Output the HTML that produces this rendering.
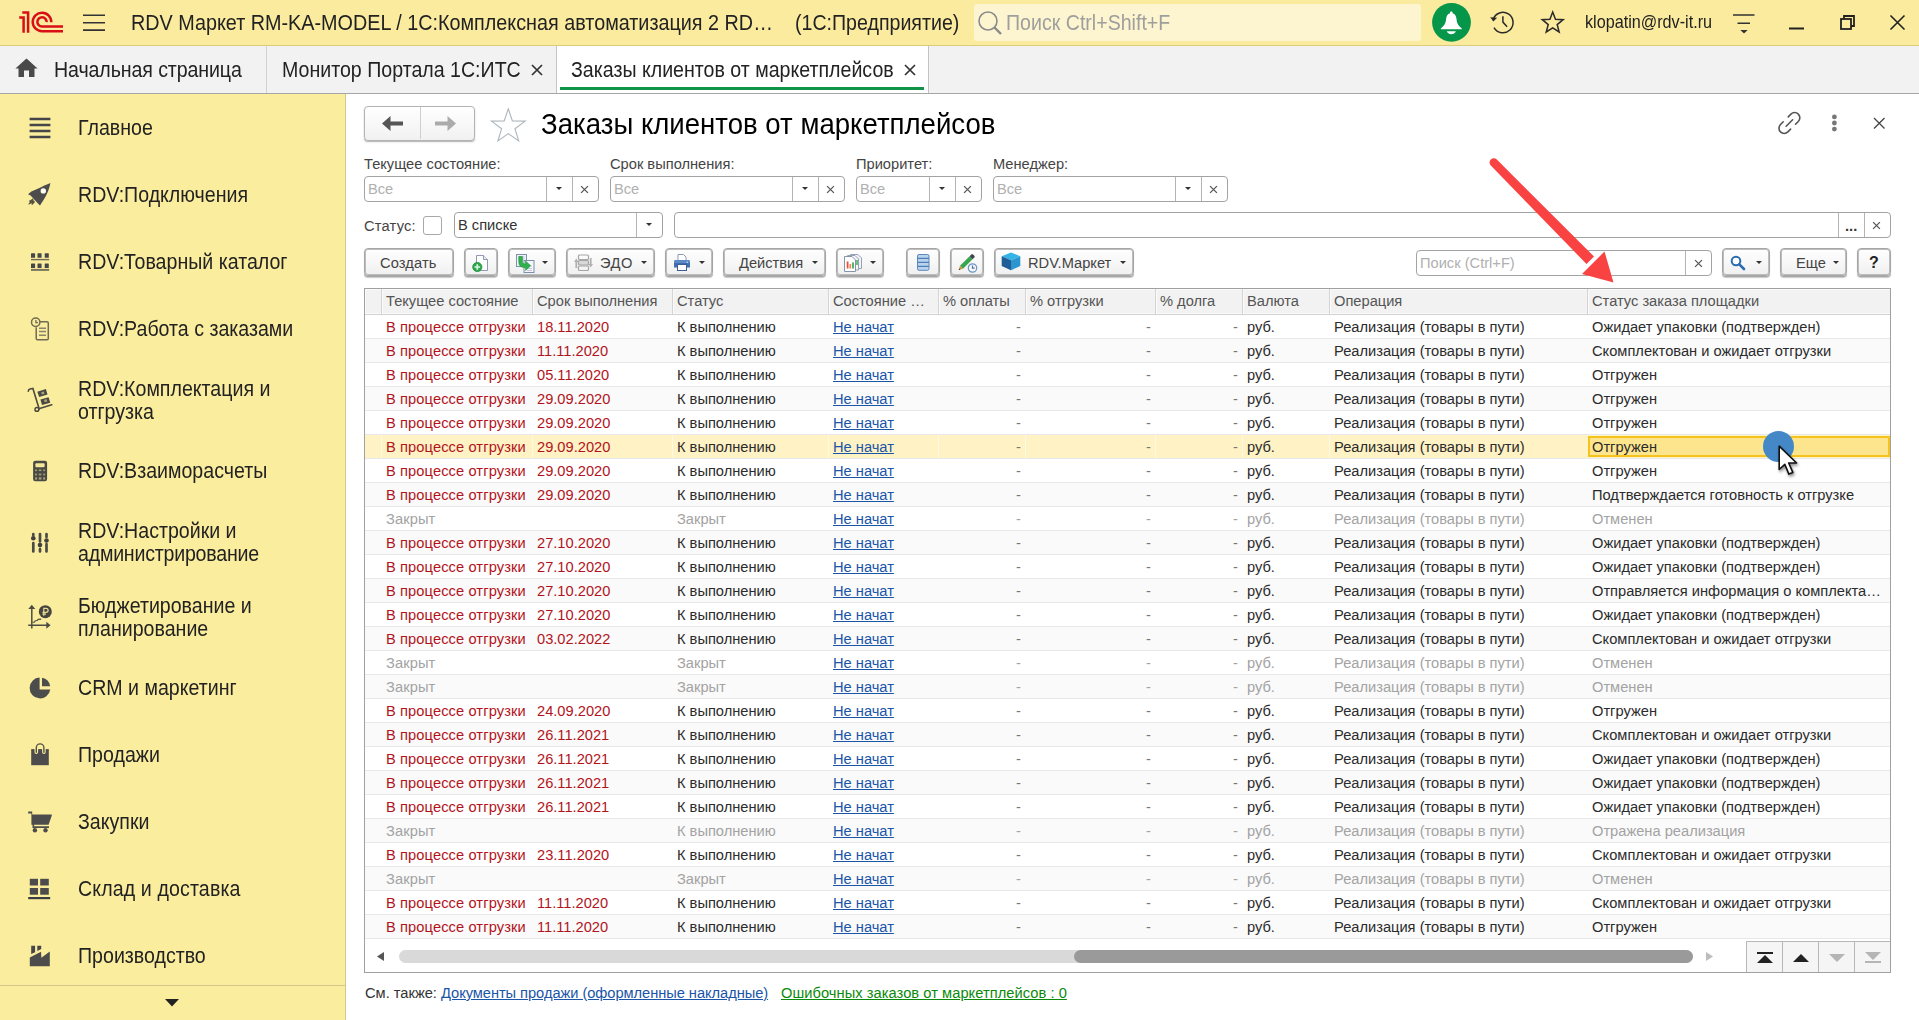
<!DOCTYPE html>
<html lang="ru">
<head>
<meta charset="utf-8">
<title>Заказы клиентов от маркетплейсов</title>
<style>
*{box-sizing:border-box;margin:0;padding:0}
html,body{width:1919px;height:1020px;overflow:hidden;background:#fff}
body{font-family:"Liberation Sans",sans-serif;font-size:14.67px;color:#333;position:relative}
.t{position:absolute;white-space:nowrap;line-height:1}
svg{position:absolute;overflow:visible}
/* ---------- title bar ---------- */
#titlebar{position:absolute;left:0;top:0;width:1919px;height:46px;background:#fbeb9e;border-bottom:1px solid #dccb78}
#titlebar .t{font-size:19.6px;color:#222}
#search{position:absolute;left:974px;top:4px;width:447px;height:37px;background:#fdf5cf;border-radius:3px}
/* ---------- tab bar ---------- */
#tabbar{position:absolute;left:0;top:46px;width:1919px;height:48px;background:#f2f2f2;border-bottom:1px solid #a6a6a6}
#tabbar .t{font-size:19.6px;color:#222;top:15px}
#tabbar .sep{position:absolute;top:0;width:1px;height:47px;background:#d2d2d2}
/* ---------- sidebar ---------- */
#side{position:absolute;left:0;top:94px;width:346px;height:926px;background:#fbed9e;border-right:1px solid #d3c884}
#side .t{font-size:19.6px;color:#222;left:78px;line-height:23px}
/* ---------- content ---------- */
.lbl{position:absolute;white-space:nowrap;line-height:1;font-size:14.67px;color:#444}
.inp{position:absolute;height:26px;border:1px solid #a3a3a3;border-radius:4px;background:#fff}
.inp .ph{position:absolute;left:3px;top:5px;font-size:14.67px;line-height:1;color:#b0b0b0;white-space:nowrap}
.inp .dv{position:absolute;top:0;width:1px;height:24px;background:#b4b4b4}
.inp .dd{position:absolute;top:10px;width:0;height:0;border-left:3px solid transparent;border-right:3px solid transparent;border-top:3.500px solid #333}
.inp svg.xx{top:8px;width:9px;height:9px}
.btn{position:absolute;top:248px;height:28px;border:1px solid #a6a6a6;border-radius:4px;background:linear-gradient(#ffffff,#f0f0f0);box-shadow:inset 0 0 0 1px #bdbdbd,0 1px 0 #a8a8a8,0 2px 1px rgba(0,0,0,.22);font-size:14.67px;color:#444;line-height:26px;white-space:nowrap}
.btn .dd{position:absolute;top:12px;width:0;height:0;border-left:3px solid transparent;border-right:3px solid transparent;border-top:3.500px solid #333}
.btn .x{position:absolute;top:1px}
/* ---------- table ---------- */
#grid{position:absolute;left:364px;top:288px;width:1527px;height:685px;border:1px solid #a0a0a0;background:#fff;overflow:hidden}
#ghead{position:absolute;left:0;top:0;width:1525px;height:26px;background:#f2f2f2;border-bottom:1px solid #d2d2d2;box-shadow:inset 0 1px 0 #fbfbfb,inset 0 -1px 0 #fbfbfb,inset 1px 0 0 #fbfbfb}
#ghead .h{position:absolute;top:5px;font-size:14.67px;line-height:1;color:#555;white-space:nowrap}
#ghead .v{position:absolute;top:0;width:2px;height:25px;background:#d4d4d4;border-right:1px solid #fbfbfb}
.r{position:absolute;left:0;width:1525px;height:24px;border-bottom:1px solid #e8e8e8;background:#fff}
.r.o{background:#fafafa}
.r span{position:absolute;top:5px;font-size:14.67px;line-height:1;white-space:nowrap;color:#2b2b2b}
.r .c1{left:21px;letter-spacing:.1px}.r .c2{left:172px}.r .c3{left:312px}.r .c4{left:468px;color:#1a55a8;text-decoration:underline}
.r .d1{left:651px}.r .d2{left:781px}.r .d3{left:868px}
.r .d1,.r .d2,.r .d3{color:#777}
.r .c8{left:882px}.r .c9{left:969px}.r .c10{left:1227px}
.r .red{color:#b2141c}
.r.g span{color:#a3a3a3}
.r.g .c4{color:#1a55a8}
.r.sel{background:#fff2c4}
.r.sel .selc{position:absolute;left:1223px;top:1px;width:302px;height:21px;border:2px solid #f5c31f;background:#fde58e}
.r.sel u{position:absolute;top:0;width:1px;height:23px;background:#fff9e3}
.t{transform:scaleY(1.08);transform-origin:0 85%}
.t.big{transform:scaleY(1.05)}

</style>
</head>
<body>
<div id="titlebar">
<svg style="left:0;top:0" width="70" height="46" viewBox="0 0 70 46"><g fill="none" stroke="#d90f17" stroke-width="2.500"><path d="M22.300 12.500H28.100V32.700"/><path d="M19.200 17.400H23.600V32.700"/><path d="M51.300 22.200A9.300 9.300 0 1 0 42 31.250H63"/><path d="M46.650 22.200A4.650 4.650 0 1 0 42 26.550H63"/></g></svg>
<svg style="left:83px;top:14px" width="22" height="18" viewBox="0 0 22 18"><g stroke="#333" stroke-width="1.600"><path d="M0 1.200H22M0 8.700H22M0 16.100H22"/></g></svg>
<span class="t" style="left:131px;top:14px;font-size:19.800px">RDV Маркет RM-KA-MODEL / 1С:Комплексная автоматизация 2 RD…</span>
<span class="t" style="left:795px;top:14px">(1С:Предприятие)</span>
<div id="search"></div>
<svg style="left:977px;top:10px" width="26" height="26" viewBox="0 0 26 26"><g fill="none" stroke="#8a8a8a" stroke-width="1.6"><circle cx="11" cy="11" r="9"/><path d="M17.5 17.5 L24 24" stroke-width="2.4"/></g></svg>
<span class="t" style="left:1006px;top:14px;color:#9e9e9e">Поиск Ctrl+Shift+F</span>
<svg style="left:1432px;top:3px" width="39" height="39" viewBox="0 0 39 39"><circle cx="19.500" cy="19.300" r="19.400" fill="#06964a"/><path fill="#fff" d="M19.300 8.500c.8 0 1.300.5 1.300 1.300v.5c2.400.8 3.600 2.800 3.900 5.600.3 3.500 1.200 6.300 5.200 9.300v1H8.900v-1c4-3 4.900-5.800 5.200-9.300.3-2.800 1.500-4.800 3.900-5.600v-.5c0-.8.5-1.300 1.300-1.300z"/><path fill="#fff" d="M14.700 28.200h9.200c-.9 2-2.500 3-4.600 3s-3.700-1-4.600-3z"/></svg>
<svg style="left:1489px;top:9px" width="27" height="27" viewBox="0 0 27 27"><g fill="none" stroke="#2b2b2b" stroke-width="1.500"><path d="M4.200 10.300A10.200 10.200 0 1 1 5 18.600"/><path d="M13.900 7.200V13.100L18.100 17.700"/></g><path d="M4.300 12.600L1.200 8.300l7 .5z" fill="#2b2b2b"/></svg>
<svg style="left:1540px;top:9px" width="27" height="26" viewBox="0 0 27 26"><path fill="none" stroke="#2b2b2b" stroke-width="1.500" stroke-linejoin="miter" d="M12.70 3.10L15.46 10.30L23.16 10.70L17.17 15.55L19.17 23.00L12.70 18.80L6.23 23.00L8.23 15.55L2.24 10.70L9.94 10.30z"/></svg>
<span class="t" style="left:1585px;top:14px;font-size:16.200px">klopatin@rdv-it.ru</span>
<svg style="left:1733px;top:14px" width="22" height="20" viewBox="0 0 22 20"><g stroke="#333" stroke-width="1.500"><path d="M0 1H21.500M4.500 9.300H17"/></g><path d="M7.300 16h7.400l-3.700 3.600z" fill="#333"/></svg>
<svg style="left:1789px;top:27px" width="15" height="3" viewBox="0 0 15 3"><path d="M0 1.500H15" stroke="#222" stroke-width="2"/></svg>
<svg style="left:1840px;top:15px" width="15" height="15" viewBox="0 0 15 15"><g fill="none" stroke="#222" stroke-width="1.8"><rect x="1" y="4" width="10" height="10"/><path d="M4 4V1H14V11H11"/></g></svg>
<svg style="left:1890px;top:15px" width="15" height="15" viewBox="0 0 15 15"><path d="M0.500 0.500L14.500 14.500M14.500 0.500L0.500 14.500" stroke="#222" stroke-width="1.6"/></svg>

</div>
<div id="tabbar">
<div style="position:absolute;left:556px;top:0;width:373px;height:47px;background:#fff;border-left:1px solid #c4c4c4;border-right:1px solid #c4c4c4"></div>
<svg style="left:15px;top:12px" width="23" height="19" viewBox="0 0 23 19"><path fill="#4a4a4a" d="M11.500 0.600L22.600 10.500h-3.100V19h-5.500v-6.500h-5V19H3.500v-8.500H0.400z"/></svg>
<span class="t" style="left:54px;letter-spacing:-0.1px">Начальная страница</span>
<div class="sep" style="left:266px"></div>
<span class="t" style="left:282px">Монитор Портала 1С:ИТС</span>
<svg style="left:531px;top:18px" width="12" height="12" viewBox="0 0 12 12"><path d="M1 1L11 11M11 1L1 11" stroke="#333" stroke-width="1.700"/></svg>
<span class="t" style="left:571px">Заказы клиентов от маркетплейсов</span>
<svg style="left:904px;top:18px" width="12" height="12" viewBox="0 0 12 12"><path d="M1 1L11 11M11 1L1 11" stroke="#333" stroke-width="1.700"/></svg>
<div style="position:absolute;left:560px;top:41px;width:364px;height:3px;background:#0f9347"></div>

</div>
<div id="side">
<svg style="left:29px;top:23px" width="22" height="22" viewBox="0 0 22 22"><g stroke="#444548" stroke-width="2.400"><path d="M0.600 2H21.400M0.600 8H21.400M0.600 14H21.400M0.600 20H21.400"/></g></svg>
<span class="t" style="top:23px">Главное</span>

<svg style="left:27px;top:88px" width="25" height="25" viewBox="0 0 25 25"><path fill="#4c4c4c" d="M23.400 1C18.500 2.800 14.500 5 11.800 6.300L4.400 9.500 1 12.300l2.600 1.300 7.800 8.400 1.600 1.600 3.500-5.500c1.600-2.300 3-5 4-7.500 1.300-3.300 2.400-6.500 2.900-9.600z"/><circle cx="16.300" cy="8.900" r="2.700" fill="#fffef0"/><path fill="#55523f" d="M5.300 16.600c1 .2 1.400 1 1.100 1.900 1.100.1 1.600 1 1.200 2-.5 1.300-1.900 1.400-2.600 2.700-.6-.8-.5-1.600 0-2.300-1 .7-2.200.8-3.400 1.800-.2-1.300.5-2.200 1.600-2.700-.7-.1-1.200-.5-1.400-1.200 1.300-.2 2.400-.7 3.500-2.200z"/></svg>
<span class="t" style="top:90px">RDV:Подключения</span>

<svg style="left:31px;top:159px" width="19" height="18" viewBox="0 0 19 18"><g fill="#46474a"><rect x="0" y="0.200" width="4.100" height="4.600" rx=".6"/><rect x="6.500" y="0.200" width="4.100" height="4.600" rx=".6"/><rect x="13.700" y="0.200" width="4.100" height="4.600" rx=".6"/><rect x="0" y="10.400" width="4.100" height="4.600" rx=".6"/><rect x="6.500" y="10.400" width="4.100" height="4.600" rx=".6"/><rect x="13.700" y="10.400" width="4.100" height="4.600" rx=".6"/></g><rect x="0" y="5.900" width="18.200" height="1.400" fill="#6f6a55"/><rect x="0" y="15.900" width="18.200" height="2" fill="#7b755c"/></svg>
<span class="t" style="top:157px">RDV:Товарный каталог</span>

<svg style="left:29px;top:223px" width="22" height="24" viewBox="0 0 22 24"><g fill="none" stroke="#6f6b55" stroke-width="1.500"><path d="M10.500 4.800H18c.8 0 1.300.5 1.300 1.300V21.400c0 .8-.5 1.300-1.300 1.300H8.500c-.8 0-1.300-.5-1.300-1.300V10.200"/><circle cx="6.700" cy="5.300" r="4.200"/><path d="M6.900 3V5.600H9" stroke-width="1.300"/><path d="M10 11.200H17M10 14.400H17M10 18.200H17" stroke="#8a846a"/></g></svg>
<span class="t" style="top:224px">RDV:Работа с заказами</span>

<svg style="left:27px;top:294px" width="26" height="25" viewBox="0 0 26 25"><g fill="none" stroke="#4e4c40" stroke-width="1.600" stroke-linecap="round"><path d="M1.300 3.200C1.300 1.800 2 1.200 3 1L5.900 0.500 12.200 21"/><path d="M12.600 20.600L24.800 16.700"/></g><circle cx="9.900" cy="21.400" r="1.900" fill="none" stroke="#4e4c40" stroke-width="1.500"/><path fill="#4a4a44" d="M10.300 3.800L18.900 1l1.600 5.500-8.300 2.400zM13.400 11.600l8.200-2.300 1.600 5.400-8.200 2.400z"/><path fill="#a8a27c" d="M14.200 4.200l2.600-.8.700 2.300-2.600.8zM17 11.900l2.600-.8.700 2.300-2.600.8z"/></svg>
<span class="t" style="top:284px">RDV:Комплектация и</span><span class="t" style="top:307px">отгрузка</span>

<svg style="left:33px;top:366px" width="15" height="22" viewBox="0 0 15 22"><rect x="0.100" y="0.800" width="14" height="20.400" rx="2.200" fill="#4a4a44"/><rect x="2.400" y="3.200" width="9.200" height="4.100" rx="1" fill="#f5e79a"/><g fill="#a59f78"><rect x="2.100" y="9.500" width="1.900" height="1.600"/><rect x="5.800" y="9.500" width="2.600" height="1.600"/><rect x="10.200" y="9.500" width="1.900" height="1.600"/><rect x="2.100" y="13.600" width="1.900" height="1.700"/><rect x="5.800" y="13.600" width="2.600" height="1.700"/><rect x="10.200" y="13.600" width="1.900" height="1.700"/><rect x="2.100" y="17.300" width="1.900" height="2.300"/><rect x="5.800" y="17.300" width="2.600" height="2.300"/><rect x="10.200" y="17.300" width="1.900" height="2.300"/></g></svg>
<span class="t" style="top:366px">RDV:Взаиморасчеты</span>

<svg style="left:31px;top:438px" width="18" height="22" viewBox="0 0 18 22"><g stroke="#4a4a46" stroke-width="2.700" stroke-linecap="round"><path d="M2.300 2V3.300M2.300 11V19.400M9 2V9.400M9 17V19.400M15.500 2V5M15.500 12.200V19.400"/></g><g fill="#3f3f42"><circle cx="2.300" cy="6.300" r="2.300"/><circle cx="9" cy="13.100" r="2.300"/><circle cx="15.500" cy="8.500" r="2.300"/></g></svg>
<span class="t" style="top:426px">RDV:Настройки и</span><span class="t" style="top:449px;letter-spacing:-.22px">администрирование</span>

<svg style="left:27px;top:510px" width="26" height="26" viewBox="0 0 26 26"><g fill="none" stroke="#4e4d45" stroke-width="1.500"><path d="M4.800 4V24.400M1.200 21.200H20"/><path d="M5.500 18.300l2-.3.800-1.300 2-.2.800-1.100 3.200-.3" stroke-width="1.200"/></g><path fill="#4e4d45" d="M4.800 0.800L8.300 5H1.300zM23.600 21.200l-4.300 3.500v-7z"/><circle cx="18.300" cy="7.700" r="6.500" fill="#46453f"/><path d="M16.800 11.800V4.300h2.300a2 2 0 0 1 0 4H15.500M15.500 10.100H19" fill="none" stroke="#e9dc93" stroke-width="1.200"/></svg>
<span class="t" style="top:501px">Бюджетирование и</span><span class="t" style="top:524px">планирование</span>

<svg style="left:29px;top:583px" width="22" height="22" viewBox="0 0 22 22"><path fill="#4c4c4c" d="M10.600 0.600V12.600H21.300A10.400 10.400 0 1 1 10.600 0.600z"/><path fill="#4c4c4c" d="M13 0.800V9.200H21.200A10.400 10.400 0 0 0 13 0.800z"/></svg>
<span class="t" style="top:583px">CRM и маркетинг</span>

<svg style="left:29px;top:649px" width="22" height="23" viewBox="0 0 22 23"><rect x="2.200" y="6.100" width="17.600" height="16.100" fill="#4c4c4c"/><path fill="none" stroke="#fbed9e" stroke-width="3.600" d="M7.300 9.300V6.100M14.900 9.300V6.100" stroke-linecap="round"/><path fill="none" stroke="#55544a" stroke-width="1.400" d="M7.300 9.300V4.700A3.800 3.800 0 0 1 14.900 4.700V9.300" stroke-linecap="round"/></svg>
<span class="t" style="top:650px">Продажи</span>

<svg style="left:27px;top:716px" width="26" height="23" viewBox="0 0 26 23"><path fill="#4c4c4c" d="M1.200 1.600H5.200V4.500H24.800V5.400L21.600 14.700H7.100V16.300H22V17.900H5.500V14.700H4.400V3.400H1.200z"/><circle cx="7.900" cy="20.200" r="2.200" fill="#4c4c4c"/><circle cx="18.500" cy="20.200" r="2.200" fill="#4c4c4c"/></svg>
<span class="t" style="top:717px">Закупки</span>

<svg style="left:28px;top:784px" width="23" height="22" viewBox="0 0 23 22"><g fill="#4c4c4c"><rect x="1.800" y="0.800" width="8.200" height="6.700"/><rect x="12.200" y="0.800" width="8.600" height="6.700"/><rect x="1.800" y="10" width="8.200" height="6.700"/><rect x="12.200" y="10" width="8.600" height="6.700"/></g><rect x="0.200" y="19" width="22" height="2.200" fill="#3c3d42"/></svg>
<span class="t" style="top:784px;letter-spacing:.12px">Склад и доставка</span>

<svg style="left:29px;top:851px" width="22" height="22" viewBox="0 0 22 22"><path fill="#4c4c4c" d="M0.800 12.600L12 6.700l.4 6.100 8.400-6.300V21.200H0.800z"/><path fill="#45464a" d="M2.200 0.800H6.100V7.300L2.200 9zM8.300 0.800H12.200V4.100L8.300 6.100z"/></svg>
<span class="t" style="top:851px">Производство</span>

<div style="position:absolute;left:0;top:891px;width:345px;height:1px;background:#d3c88a"></div>
<svg style="left:165px;top:905px" width="14" height="8" viewBox="0 0 14 8"><path d="M0 0h14l-7 7.500z" fill="#222"/></svg>

</div>
<!-- nav back/forward -->
<div style="position:absolute;left:364px;top:106px;width:111px;height:35px;border:1px solid #b3b3b3;border-radius:4px;background:linear-gradient(#fff,#f1f1f1);box-shadow:0 1px 0 #bdbdbd,0 1px 2px rgba(0,0,0,.2)">
<div style="position:absolute;left:55px;top:0;width:1px;height:32px;background:#cfcfcf"></div>
<svg style="left:17px;top:9px" width="22" height="15" viewBox="0 0 22 15"><path fill="#555" d="M8.500 0v5.500H21v4H8.500V15L0 7.500z"/></svg>
<svg style="left:70px;top:9px" width="22" height="15" viewBox="0 0 22 15"><path fill="#ababab" d="M12.500 0v5.500H0v4h12.500V15L21 7.500z"/></svg>
</div>
<svg style="left:489px;top:106px" width="38" height="36" viewBox="0 0 38 36"><path fill="#fff" stroke="#adb5bb" stroke-width="1.100" d="M19.30 2.90L23.41 14.94L36.13 15.13L25.96 22.76L29.70 34.92L19.30 27.60L8.90 34.92L12.64 22.76L2.47 15.13L15.19 14.94z"/></svg>
<span class="t big" style="left:541px;top:111px;font-size:27.600px;color:#000">Заказы клиентов от маркетплейсов</span>
<svg style="left:1776px;top:110px" width="27" height="26" viewBox="0 0 27 26"><g transform="translate(13.400 13) rotate(-45)" fill="none" stroke="#555" stroke-width="1.600" stroke-linecap="round"><path d="M3.500 -5.200H7.400A5.200 5.200 0 0 1 7.400 5.200H3.500"/><path d="M-3.500 -5.200H-7.400A5.200 5.200 0 0 0 -7.400 5.200H-3.500"/><path d="M-4.600 0H4.600"/></g></svg>
<svg style="left:1831px;top:113px" width="7" height="20" viewBox="0 0 7 20"><g fill="#777"><circle cx="3.400" cy="3.900" r="2.400"/><circle cx="3.400" cy="10" r="2.400"/><circle cx="3.400" cy="16.100" r="2.400"/></g></svg>
<svg style="left:1873px;top:117px" width="12" height="12" viewBox="0 0 12 12"><path d="M1 1L11.500 11.500M11.500 1L1 11.500" stroke="#444" stroke-width="1.300"/></svg>

<!-- filter row -->
<span class="lbl" style="left:364px;top:157px">Текущее состояние:</span>
<span class="lbl" style="left:610px;top:157px">Срок выполнения:</span>
<span class="lbl" style="left:856px;top:157px">Приоритет:</span>
<span class="lbl" style="left:993px;top:157px">Менеджер:</span>

<div class="inp" style="left:364px;top:176px;width:235px"><span class="ph">Все</span><i class="dv" style="left:181px"></i><i class="dd" style="left:191px"></i><i class="dv" style="left:207px"></i><svg class="xx" style="left:215px" viewBox="0 0 10 10"><path d="M1.200 1.200L8.800 8.800M8.800 1.200L1.200 8.800" stroke="#555" stroke-width="1.400"/></svg></div>
<div class="inp" style="left:610px;top:176px;width:235px"><span class="ph">Все</span><i class="dv" style="left:181px"></i><i class="dd" style="left:191px"></i><i class="dv" style="left:207px"></i><svg class="xx" style="left:215px" viewBox="0 0 10 10"><path d="M1.200 1.200L8.800 8.800M8.800 1.200L1.200 8.800" stroke="#555" stroke-width="1.400"/></svg></div>
<div class="inp" style="left:856px;top:176px;width:126px"><span class="ph">Все</span><i class="dv" style="left:72px"></i><i class="dd" style="left:82px"></i><i class="dv" style="left:98px"></i><svg class="xx" style="left:106px" viewBox="0 0 10 10"><path d="M1.200 1.200L8.800 8.800M8.800 1.200L1.200 8.800" stroke="#555" stroke-width="1.400"/></svg></div>
<div class="inp" style="left:993px;top:176px;width:235px"><span class="ph">Все</span><i class="dv" style="left:181px"></i><i class="dd" style="left:191px"></i><i class="dv" style="left:207px"></i><svg class="xx" style="left:215px" viewBox="0 0 10 10"><path d="M1.200 1.200L8.800 8.800M8.800 1.200L1.200 8.800" stroke="#555" stroke-width="1.400"/></svg></div>

<!-- status row -->
<span class="lbl" style="left:364px;top:219px;letter-spacing:.2px">Статус:</span>
<div style="position:absolute;left:423px;top:216px;width:19px;height:19px;border:1px solid #a8a8a8;border-radius:3px;background:#fff"></div>
<div class="inp" style="left:454px;top:212px;width:209px"><span class="ph" style="color:#333">В списке</span><i class="dv" style="left:181px"></i><i class="dd" style="left:191px"></i></div>
<div class="inp" style="left:674px;top:212px;width:1217px"><i class="dv" style="left:1163px"></i><span class="ph" style="left:1170px;top:6px;color:#333;font-weight:bold">...</span><i class="dv" style="left:1189px"></i><svg class="xx" style="left:1197px" viewBox="0 0 10 10"><path d="M1.200 1.200L8.800 8.800M8.800 1.200L1.200 8.800" stroke="#555" stroke-width="1.400"/></svg></div>

<!-- toolbar -->
<div class="btn" style="left:364px;width:90px"><span class="x" style="left:15px;letter-spacing:.12px">Создать</span></div>
<div class="btn" style="left:464px;width:34px"><svg style="left:7px;top:5px" width="18" height="18" viewBox="0 0 18 18"><path d="M4.500 1.500H11.500L15.500 5.500V16.500H4.500z" fill="#fff" stroke="#8e9ab0" stroke-width="1"/><path d="M11.500 1.500V5.500H15.500" fill="#e8ecf3" stroke="#8e9ab0" stroke-width="1"/><circle cx="5.300" cy="13" r="4.600" fill="#2aa84a"/><circle cx="5.300" cy="13" r="4.600" fill="none" stroke="#1d8a38" stroke-width=".8"/><path d="M5.300 10.200V15.800M2.500 13H8.100" stroke="#dff5e3" stroke-width="1.700"/></svg></div>
<div class="btn" style="left:508px;width:48px"><svg style="left:6px;top:4px" width="20" height="20" viewBox="0 0 20 20"><rect x="1.500" y="1.500" width="10" height="12" fill="#eef1f6" stroke="#7f8fae" stroke-width="1"/><path d="M3.500 4H9.500M3.500 6H9.500" stroke="#b8c2d4" stroke-width="1"/><rect x="9" y="7.500" width="10" height="12" fill="#f4f6fa" stroke="#7f8fae" stroke-width="1"/><path d="M12 13H17M12 15.500H17M12 17.500H17" stroke="#c2cad9" stroke-width="1"/><path d="M3.800 3.500h3.600v5c0 1.600.8 2.400 2.400 2.400h.8V8l5 4.700-5 4.700v-2.900H9.500c-3.800 0-5.700-1.900-5.700-5.700z" fill="#2fb24c" stroke="#1e8f3a" stroke-width=".6"/></svg><i class="dd" style="left:33px"></i></div>
<div class="btn" style="left:566px;width:89px"><svg style="left:7px;top:5px" width="19" height="17" viewBox="0 0 19 17"><g fill="none" stroke="#a6a6a6" stroke-width="1.200"><rect x="4.500" y="1" width="10" height="4.500" rx="1"/><rect x="4.500" y="6.500" width="10" height="4.500" rx="1" fill="#d8d8d8"/><rect x="4.500" y="12" width="10" height="4.500" rx="1"/></g><path d="M2.300 4.500l2.300 3.500H3.200v6H1.400V8H0z" fill="#b0b0b0"/><path d="M16.700 13.500l-2.300-3.500h1.400V4h1.800v6H19z" fill="#b0b0b0"/></svg><span class="x" style="left:33px;letter-spacing:.5px">ЭДО</span><i class="dd" style="left:74px"></i></div>
<div class="btn" style="left:665px;width:48px"><svg style="left:7px;top:5px" width="18" height="17" viewBox="0 0 18 17"><path d="M5 0.500H10.500L13 3V7H5z" fill="#fff" stroke="#8f9bb3" stroke-width="1"/><path d="M1 8c0-1.300.7-2 2-2h12c1.300 0 2 .7 2 2v5.500H1z" fill="#3f6fae"/><path d="M1 8c0-1.300.7-2 2-2h12c1.300 0 2 .7 2 2v1H1z" fill="#5b8ac6"/><rect x="4.500" y="10.500" width="9" height="6" fill="#fff" stroke="#3b5f91" stroke-width="1"/><circle cx="14.300" cy="8.300" r=".8" fill="#cfe0f5"/></svg><i class="dd" style="left:33px"></i></div>
<div class="btn" style="left:723px;width:103px"><span class="x" style="left:15px">Действия</span><i class="dd" style="left:88px"></i></div>
<div class="btn" style="left:836px;width:48px"><svg style="left:6px;top:4px" width="20" height="19" viewBox="0 0 20 19"><path d="M7.500 1.500H15L18.500 5V15.500H7.500z" fill="#f2f4f8" stroke="#98a2b6" stroke-width="1"/><path d="M4.500 2.500H12L15.500 6V17H4.500z" fill="#f6f7fa" stroke="#98a2b6" stroke-width="1"/><path d="M1.500 3.500H9L12.500 7V18.500H1.500z" fill="#fff" stroke="#8893aa" stroke-width="1"/><path d="M4.600 8.500V15.500" stroke="#e4533a" stroke-width="1.800"/><path d="M7.300 11V15.500" stroke="#f08a5c" stroke-width="1.800"/><path d="M10 9.500V15.500" stroke="#3fae57" stroke-width="1.800"/><path d="M14 7V12" stroke="#3fae57" stroke-width="1.500"/></svg><i class="dd" style="left:33px"></i></div>
<div class="btn" style="left:906px;width:34px"><svg style="left:10px;top:5px" width="13" height="17" viewBox="0 0 13 17"><rect x="0.500" y="0.500" width="11.500" height="15.800" rx="1.500" fill="#b9d3ee" stroke="#5d89ba" stroke-width="1"/><path d="M0.500 4.300H12M0.500 8.300H12M0.500 12.300H12" stroke="#4f7fb5" stroke-width="1.300"/></svg></div>
<div class="btn" style="left:950px;width:34px"><svg style="left:6px;top:4px" width="22" height="21" viewBox="0 0 22 21"><path d="M3 12.800L12.600 3.200l3 3L6 15.800z" fill="#3aa54f"/><path d="M12.600 3.200l1.700-1.700c.5-.5 1.300-.5 1.800 0l1.200 1.200c.5.500.5 1.300 0 1.800l-1.700 1.700z" fill="#3e4450"/><path d="M3 12.800L1.700 17.100 6 15.800z" fill="#c9923f"/><path d="M1.700 17.100l.5-1.700 1.200 1.200z" fill="#333"/><circle cx="15.500" cy="15" r="4.200" fill="#f4f8fc" stroke="#6e94be" stroke-width="1.200"/><path d="M15.500 12.600V15.200H17.600" fill="none" stroke="#4c7099" stroke-width="1.200"/></svg></div>
<div class="btn" style="left:994px;width:140px"><svg style="left:6px;top:3px" width="20" height="19" viewBox="0 0 20 19"><path d="M10 0.500L19.300 4.300 10 8.300 0.700 4.300z" fill="#36b3e6"/><path d="M0.700 4.300L10 8.300V18.300L0.700 14z" fill="#1f5e96"/><path d="M19.300 4.300L10 8.300V18.300L19.300 14z" fill="#2a95cf"/></svg><span class="x" style="left:33px">RDV.Маркет</span><i class="dd" style="left:125px"></i></div>
<div class="inp" style="left:1416px;top:250px;width:296px"><span class="ph">Поиск (Ctrl+F)</span><i class="dv" style="left:268px"></i><svg class="xx" style="left:277px" viewBox="0 0 10 10"><path d="M1.200 1.200L8.800 8.800M8.800 1.200L1.200 8.800" stroke="#555" stroke-width="1.400"/></svg></div>
<div class="btn" style="left:1722px;width:48px"><svg style="left:7px;top:6px" width="16" height="16" viewBox="0 0 16 16"><circle cx="6" cy="6" r="4.300" fill="#fff" stroke="#2a6cb3" stroke-width="2"/><path d="M9.300 9.300L14 14" stroke="#2a6cb3" stroke-width="2.600" stroke-linecap="round"/></svg><i class="dd" style="left:33px"></i></div>
<div class="btn" style="left:1780px;width:67px"><span class="x" style="left:15px">Еще</span><i class="dd" style="left:52px"></i></div>
<div class="btn" style="left:1857px;width:34px"><span class="x" style="left:11px;font-weight:bold;color:#222;font-size:16px">?</span></div>

<!-- grid -->
<div id="grid">
<div id="ghead">
<i class="v" style="left:16px"></i><span class="h" style="left:21px">Текущее состояние</span>
<i class="v" style="left:167px"></i><span class="h" style="left:172px">Срок выполнения</span>
<i class="v" style="left:307px"></i><span class="h" style="left:312px">Статус</span>
<i class="v" style="left:463px"></i><span class="h" style="left:468px">Состояние …</span>
<i class="v" style="left:573px"></i><span class="h" style="left:578px">% оплаты</span>
<i class="v" style="left:660px"></i><span class="h" style="left:665px">% отгрузки</span>
<i class="v" style="left:790px"></i><span class="h" style="left:795px">% долга</span>
<i class="v" style="left:877px"></i><span class="h" style="left:882px">Валюта</span>
<i class="v" style="left:964px"></i><span class="h" style="left:969px">Операция</span>
<i class="v" style="left:1222px"></i><span class="h" style="left:1227px">Статус заказа площадки</span>
</div>
<div class="r" style="top:26px"><span class="c1 red">В процессе отгрузки</span><span class="c2 red">18.11.2020</span><span class="c3">К выполнению</span><span class="c4">Не начат</span><span class="d1">-</span><span class="d2">-</span><span class="d3">-</span><span class="c8">руб.</span><span class="c9">Реализация (товары в пути)</span><span class="c10">Ожидает упаковки (подтвержден)</span></div>
<div class="r o" style="top:50px"><span class="c1 red">В процессе отгрузки</span><span class="c2 red">11.11.2020</span><span class="c3">К выполнению</span><span class="c4">Не начат</span><span class="d1">-</span><span class="d2">-</span><span class="d3">-</span><span class="c8">руб.</span><span class="c9">Реализация (товары в пути)</span><span class="c10">Скомплектован и ожидает отгрузки</span></div>
<div class="r" style="top:74px"><span class="c1 red">В процессе отгрузки</span><span class="c2 red">05.11.2020</span><span class="c3">К выполнению</span><span class="c4">Не начат</span><span class="d1">-</span><span class="d2">-</span><span class="d3">-</span><span class="c8">руб.</span><span class="c9">Реализация (товары в пути)</span><span class="c10">Отгружен</span></div>
<div class="r o" style="top:98px"><span class="c1 red">В процессе отгрузки</span><span class="c2 red">29.09.2020</span><span class="c3">К выполнению</span><span class="c4">Не начат</span><span class="d1">-</span><span class="d2">-</span><span class="d3">-</span><span class="c8">руб.</span><span class="c9">Реализация (товары в пути)</span><span class="c10">Отгружен</span></div>
<div class="r" style="top:122px"><span class="c1 red">В процессе отгрузки</span><span class="c2 red">29.09.2020</span><span class="c3">К выполнению</span><span class="c4">Не начат</span><span class="d1">-</span><span class="d2">-</span><span class="d3">-</span><span class="c8">руб.</span><span class="c9">Реализация (товары в пути)</span><span class="c10">Отгружен</span></div>
<div class="r o sel" style="top:146px"><i class="selc"></i><u style="left:16px"></u><u style="left:167px"></u><u style="left:307px"></u><u style="left:463px"></u><u style="left:573px"></u><u style="left:660px"></u><u style="left:790px"></u><u style="left:877px"></u><u style="left:964px"></u><span class="c1 red">В процессе отгрузки</span><span class="c2 red">29.09.2020</span><span class="c3">К выполнению</span><span class="c4">Не начат</span><span class="d1">-</span><span class="d2">-</span><span class="d3">-</span><span class="c8">руб.</span><span class="c9">Реализация (товары в пути)</span><span class="c10">Отгружен</span></div>
<div class="r" style="top:170px"><span class="c1 red">В процессе отгрузки</span><span class="c2 red">29.09.2020</span><span class="c3">К выполнению</span><span class="c4">Не начат</span><span class="d1">-</span><span class="d2">-</span><span class="d3">-</span><span class="c8">руб.</span><span class="c9">Реализация (товары в пути)</span><span class="c10">Отгружен</span></div>
<div class="r o" style="top:194px"><span class="c1 red">В процессе отгрузки</span><span class="c2 red">29.09.2020</span><span class="c3">К выполнению</span><span class="c4">Не начат</span><span class="d1">-</span><span class="d2">-</span><span class="d3">-</span><span class="c8">руб.</span><span class="c9">Реализация (товары в пути)</span><span class="c10">Подтверждается готовность к отгрузке</span></div>
<div class="r g" style="top:218px"><span class="c1">Закрыт</span><span class="c3">Закрыт</span><span class="c4">Не начат</span><span class="d1">-</span><span class="d2">-</span><span class="d3">-</span><span class="c8">руб.</span><span class="c9">Реализация (товары в пути)</span><span class="c10">Отменен</span></div>
<div class="r o" style="top:242px"><span class="c1 red">В процессе отгрузки</span><span class="c2 red">27.10.2020</span><span class="c3">К выполнению</span><span class="c4">Не начат</span><span class="d1">-</span><span class="d2">-</span><span class="d3">-</span><span class="c8">руб.</span><span class="c9">Реализация (товары в пути)</span><span class="c10">Ожидает упаковки (подтвержден)</span></div>
<div class="r" style="top:266px"><span class="c1 red">В процессе отгрузки</span><span class="c2 red">27.10.2020</span><span class="c3">К выполнению</span><span class="c4">Не начат</span><span class="d1">-</span><span class="d2">-</span><span class="d3">-</span><span class="c8">руб.</span><span class="c9">Реализация (товары в пути)</span><span class="c10">Ожидает упаковки (подтвержден)</span></div>
<div class="r o" style="top:290px"><span class="c1 red">В процессе отгрузки</span><span class="c2 red">27.10.2020</span><span class="c3">К выполнению</span><span class="c4">Не начат</span><span class="d1">-</span><span class="d2">-</span><span class="d3">-</span><span class="c8">руб.</span><span class="c9">Реализация (товары в пути)</span><span class="c10">Отправляется информация о комплекта…</span></div>
<div class="r" style="top:314px"><span class="c1 red">В процессе отгрузки</span><span class="c2 red">27.10.2020</span><span class="c3">К выполнению</span><span class="c4">Не начат</span><span class="d1">-</span><span class="d2">-</span><span class="d3">-</span><span class="c8">руб.</span><span class="c9">Реализация (товары в пути)</span><span class="c10">Ожидает упаковки (подтвержден)</span></div>
<div class="r o" style="top:338px"><span class="c1 red">В процессе отгрузки</span><span class="c2 red">03.02.2022</span><span class="c3">К выполнению</span><span class="c4">Не начат</span><span class="d1">-</span><span class="d2">-</span><span class="d3">-</span><span class="c8">руб.</span><span class="c9">Реализация (товары в пути)</span><span class="c10">Скомплектован и ожидает отгрузки</span></div>
<div class="r g" style="top:362px"><span class="c1">Закрыт</span><span class="c3">Закрыт</span><span class="c4">Не начат</span><span class="d1">-</span><span class="d2">-</span><span class="d3">-</span><span class="c8">руб.</span><span class="c9">Реализация (товары в пути)</span><span class="c10">Отменен</span></div>
<div class="r o g" style="top:386px"><span class="c1">Закрыт</span><span class="c3">Закрыт</span><span class="c4">Не начат</span><span class="d1">-</span><span class="d2">-</span><span class="d3">-</span><span class="c8">руб.</span><span class="c9">Реализация (товары в пути)</span><span class="c10">Отменен</span></div>
<div class="r" style="top:410px"><span class="c1 red">В процессе отгрузки</span><span class="c2 red">24.09.2020</span><span class="c3">К выполнению</span><span class="c4">Не начат</span><span class="d1">-</span><span class="d2">-</span><span class="d3">-</span><span class="c8">руб.</span><span class="c9">Реализация (товары в пути)</span><span class="c10">Отгружен</span></div>
<div class="r o" style="top:434px"><span class="c1 red">В процессе отгрузки</span><span class="c2 red">26.11.2021</span><span class="c3">К выполнению</span><span class="c4">Не начат</span><span class="d1">-</span><span class="d2">-</span><span class="d3">-</span><span class="c8">руб.</span><span class="c9">Реализация (товары в пути)</span><span class="c10">Скомплектован и ожидает отгрузки</span></div>
<div class="r" style="top:458px"><span class="c1 red">В процессе отгрузки</span><span class="c2 red">26.11.2021</span><span class="c3">К выполнению</span><span class="c4">Не начат</span><span class="d1">-</span><span class="d2">-</span><span class="d3">-</span><span class="c8">руб.</span><span class="c9">Реализация (товары в пути)</span><span class="c10">Ожидает упаковки (подтвержден)</span></div>
<div class="r o" style="top:482px"><span class="c1 red">В процессе отгрузки</span><span class="c2 red">26.11.2021</span><span class="c3">К выполнению</span><span class="c4">Не начат</span><span class="d1">-</span><span class="d2">-</span><span class="d3">-</span><span class="c8">руб.</span><span class="c9">Реализация (товары в пути)</span><span class="c10">Ожидает упаковки (подтвержден)</span></div>
<div class="r" style="top:506px"><span class="c1 red">В процессе отгрузки</span><span class="c2 red">26.11.2021</span><span class="c3">К выполнению</span><span class="c4">Не начат</span><span class="d1">-</span><span class="d2">-</span><span class="d3">-</span><span class="c8">руб.</span><span class="c9">Реализация (товары в пути)</span><span class="c10">Ожидает упаковки (подтвержден)</span></div>
<div class="r o g" style="top:530px"><span class="c1">Закрыт</span><span class="c3">К выполнению</span><span class="c4">Не начат</span><span class="d1">-</span><span class="d2">-</span><span class="d3">-</span><span class="c8">руб.</span><span class="c9">Реализация (товары в пути)</span><span class="c10">Отражена реализация</span></div>
<div class="r" style="top:554px"><span class="c1 red">В процессе отгрузки</span><span class="c2 red">23.11.2020</span><span class="c3">К выполнению</span><span class="c4">Не начат</span><span class="d1">-</span><span class="d2">-</span><span class="d3">-</span><span class="c8">руб.</span><span class="c9">Реализация (товары в пути)</span><span class="c10">Скомплектован и ожидает отгрузки</span></div>
<div class="r o g" style="top:578px"><span class="c1">Закрыт</span><span class="c3">Закрыт</span><span class="c4">Не начат</span><span class="d1">-</span><span class="d2">-</span><span class="d3">-</span><span class="c8">руб.</span><span class="c9">Реализация (товары в пути)</span><span class="c10">Отменен</span></div>
<div class="r" style="top:602px"><span class="c1 red">В процессе отгрузки</span><span class="c2 red">11.11.2020</span><span class="c3">К выполнению</span><span class="c4">Не начат</span><span class="d1">-</span><span class="d2">-</span><span class="d3">-</span><span class="c8">руб.</span><span class="c9">Реализация (товары в пути)</span><span class="c10">Скомплектован и ожидает отгрузки</span></div>
<div class="r o" style="top:626px"><span class="c1 red">В процессе отгрузки</span><span class="c2 red">11.11.2020</span><span class="c3">К выполнению</span><span class="c4">Не начат</span><span class="d1">-</span><span class="d2">-</span><span class="d3">-</span><span class="c8">руб.</span><span class="c9">Реализация (товары в пути)</span><span class="c10">Отгружен</span></div>
<!-- scrollbar -->
<svg style="left:12px;top:663px" width="7" height="9" viewBox="0 0 7 9"><path d="M7 0v9L0 4.500z" fill="#555"/></svg>
<div style="position:absolute;left:34px;top:661px;width:1294px;height:13px;border-radius:7px;background:#d9d9d9"></div>
<div style="position:absolute;left:709px;top:661px;width:619px;height:13px;border-radius:7px;background:#9a9a9a"></div>
<svg style="left:1341px;top:663px" width="7" height="9" viewBox="0 0 7 9"><path d="M0 0v9l7-4.500z" fill="#bdbdbd"/></svg>
<div style="position:absolute;left:1381px;top:652px;width:145px;height:33px;background:#f5f5f5;border-top:1px solid #b8b8b8;border-left:1px solid #b8b8b8">
<i style="position:absolute;left:35px;top:0;width:1px;height:32px;background:#b8b8b8"></i>
<i style="position:absolute;left:71px;top:0;width:1px;height:32px;background:#b8b8b8"></i>
<i style="position:absolute;left:107px;top:0;width:1px;height:32px;background:#b8b8b8"></i>
<svg style="left:10px;top:10px" width="16" height="11" viewBox="0 0 16 11"><path d="M0 0h16v2H0zM8 3l8 8H0z" fill="#222"/></svg>
<svg style="left:46px;top:12px" width="16" height="8" viewBox="0 0 16 8"><path d="M8 0l8 8H0z" fill="#222"/></svg>
<svg style="left:82px;top:12px" width="16" height="8" viewBox="0 0 16 8"><path d="M0 0h16l-8 8z" fill="#b5b5b5"/></svg>
<svg style="left:118px;top:10px" width="16" height="11" viewBox="0 0 16 11"><path d="M0 0h16l-8 8zM0 9h16v2H0z" fill="#b5b5b5"/></svg>
</div>
</div>

<!-- footer -->
<span class="lbl" style="left:365px;top:986px;color:#333">См. также:</span>
<span class="lbl" style="left:441px;top:986px;color:#1a55a8;text-decoration:underline;letter-spacing:-.05px">Документы продажи (оформленные накладные)</span>
<span class="lbl" style="left:781px;top:986px;color:#0a8a0a;text-decoration:underline;letter-spacing:.05px">Ошибочных заказов от маркетплейсов : 0</span>

<!-- annotations -->
<svg style="left:1480px;top:150px" width="150" height="145" viewBox="1480 150 150 145"><path d="M1490.800 165.600a4.200 4.200 0 0 1 6-6L1594 256.500 1586.500 264z" fill="#f94242"/><path d="M1613.500 282.500l-31.500-8.500 22.500-22.500z" fill="#f94242"/></svg>
<div style="position:absolute;left:1763px;top:431px;width:31px;height:31px;border-radius:50%;background:#4488c8"></div>
<svg style="left:1778px;top:445px;filter:drop-shadow(1px 2px 1.500px rgba(0,0,0,.45))" width="21" height="31" viewBox="0 0 21 31"><path d="M1.200 1.200v23.300l5.600-5.100 4.100 9.700 3.900-1.700-4.100-9.400h7.900z" fill="#fff" stroke="#111" stroke-width="1.600" stroke-linejoin="round"/></svg>

</body>
</html>
